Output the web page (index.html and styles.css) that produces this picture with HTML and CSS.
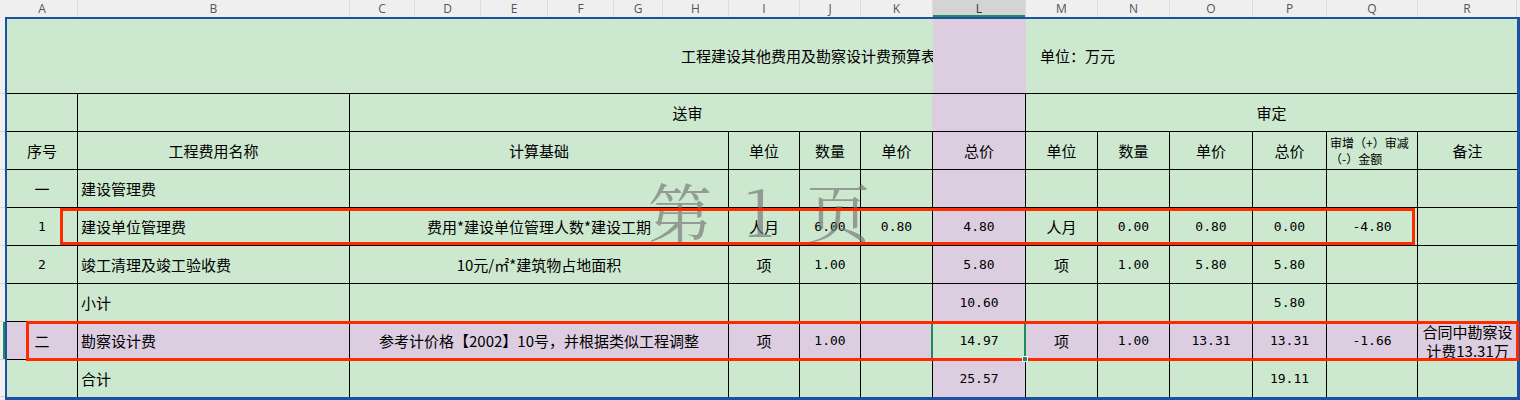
FILE: index.html
```html
<!DOCTYPE html>
<html lang="zh-CN">
<head>
<meta charset="utf-8">
<title>工程建设其他费用及勘察设计费预算表</title>
<link rel="stylesheet" href="styles.css">
</head>
<body>
<div class="app">
  <div class="colhead">
    <div class="corner"></div>
    <div class="ch">A</div><div class="ch">B</div><div class="ch">C</div><div class="ch">D</div>
    <div class="ch">E</div><div class="ch">F</div><div class="ch">G</div><div class="ch">H</div>
    <div class="ch">I</div><div class="ch">J</div><div class="ch">K</div><div class="ch sel">L</div>
    <div class="ch">M</div><div class="ch">N</div><div class="ch">O</div><div class="ch">P</div>
    <div class="ch">Q</div><div class="ch">R</div><div class="ch-rest"></div>
  </div>
  <div class="main">
    <div class="rowhead">
      <div class="rh0"></div><div class="rh"></div><div class="rh"></div><div class="rh"></div><div class="rh"></div>
      <div class="rh"></div><div class="rh"></div><div class="rh"></div><div class="rh rh-sel"></div><div class="rh"></div>
    </div>
    <div class="sheet">
      <!-- row 1 -->
      <div class="c t1 t-left"><span class="title">工程建设其他费用及勘察设计费预算表</span></div>
      <div class="c t1 pu"></div>
      <div class="c t1 t-right">单位：万元</div>
      <!-- row 2 -->
      <div class="c"></div>
      <div class="c"></div>
      <div class="c span-cl">送审</div>
      <div class="c span-mr nr">审定</div>
      <!-- row 3 -->
      <div class="c">序号</div>
      <div class="c">工程费用名称</div>
      <div class="c span-ch">计算基础</div>
      <div class="c">单位</div>
      <div class="c">数量</div>
      <div class="c">单价</div>
      <div class="c pu">总价</div>
      <div class="c">单位</div>
      <div class="c">数量</div>
      <div class="c">单价</div>
      <div class="c">总价</div>
      <div class="c qh">审增（+）审减（-）金额</div>
      <div class="c nr">备注</div>
      <!-- row 4 -->
      <div class="c">一</div>
      <div class="c l">建设管理费</div>
      <div class="c span-ch"></div>
      <div class="c"></div><div class="c"></div><div class="c"></div>
      <div class="c pu"></div>
      <div class="c"></div><div class="c"></div><div class="c"></div><div class="c"></div><div class="c"></div>
      <div class="c nr"></div>
      <!-- row 5 -->
      <div class="c n">1</div>
      <div class="c l">建设单位管理费</div>
      <div class="c span-ch">费用*建设单位管理人数*建设工期</div>
      <div class="c">人月</div>
      <div class="c n">6.00</div>
      <div class="c n">0.80</div>
      <div class="c n pu">4.80</div>
      <div class="c">人月</div>
      <div class="c n">0.00</div>
      <div class="c n">0.80</div>
      <div class="c n">0.00</div>
      <div class="c n">-4.80</div>
      <div class="c nr"></div>
      <!-- row 6 -->
      <div class="c n">2</div>
      <div class="c l">竣工清理及竣工验收费</div>
      <div class="c span-ch">10元/㎡*建筑物占地面积</div>
      <div class="c">项</div>
      <div class="c n">1.00</div>
      <div class="c"></div>
      <div class="c n pu">5.80</div>
      <div class="c">项</div>
      <div class="c n">1.00</div>
      <div class="c n">5.80</div>
      <div class="c n">5.80</div>
      <div class="c"></div>
      <div class="c nr"></div>
      <!-- row 7 -->
      <div class="c"></div>
      <div class="c l">小计</div>
      <div class="c span-ch"></div>
      <div class="c"></div><div class="c"></div><div class="c"></div>
      <div class="c n pu">10.60</div>
      <div class="c"></div><div class="c"></div><div class="c"></div>
      <div class="c n">5.80</div>
      <div class="c"></div>
      <div class="c nr"></div>
      <!-- row 8 -->
      <div class="c pu">二</div>
      <div class="c l pu">勘察设计费</div>
      <div class="c span-ch pu">参考计价格【2002】10号，并根据类似工程调整</div>
      <div class="c pu">项</div>
      <div class="c n pu">1.00</div>
      <div class="c pu"></div>
      <div class="c n active">14.97</div>
      <div class="c pu">项</div>
      <div class="c n pu">1.00</div>
      <div class="c n pu">13.31</div>
      <div class="c n pu">13.31</div>
      <div class="c n pu">-1.66</div>
      <div class="c nr pu note">合同中勘察设计费13.31万</div>
      <!-- row 9 -->
      <div class="c last"></div>
      <div class="c l last">合计</div>
      <div class="c span-ch last"></div>
      <div class="c last"></div><div class="c last"></div><div class="c last"></div>
      <div class="c n pu last">25.57</div>
      <div class="c last"></div><div class="c last"></div><div class="c last"></div>
      <div class="c n last">19.11</div>
      <div class="c last"></div>
      <div class="c nr last"></div>
    </div>
  </div>

  <div class="wm"><span>第</span><span>1</span><span>页</span></div>
  <div class="mark m1"></div>
  <div class="mark m2"></div>
</div>
</body>
</html>
```

FILE: styles.css
```css
html, body {
  margin: 0;
  padding: 0;
}
body {
  background: #efefef;
  font-family: "Noto Sans CJK SC", sans-serif;
}
.app {
  position: relative;
  width: 1520px;
  height: 400px;
  overflow: hidden;
  background: #efefef;
}

/* column letters */
.colhead {
  display: grid;
  grid-template-columns: 7px 71px 272px 65px 66px 67px 66px 49px 66px 71px 61px 72px 93px 72px 72px 83px 74px 91px 99px 1fr;
  height: 17px;
  background: #efefef;
  font-family: "Open Sans", "Liberation Sans", sans-serif;
  font-size: 12px;
  color: #555;
}
.ch {
  box-sizing: border-box;
  border-right: 1px solid #dcdcdc;
  display: flex;
  align-items: center;
  justify-content: center;
  line-height: 15px;
}
.ch.sel {
  background: #d4d4d4;
  box-shadow: inset 0 -2px 0 #1f8a5a;
  color: #333;
}

.main {
  display: flex;
}

/* row header strip */
.rowhead {
  width: 5px;
  display: grid;
  grid-template-rows: 2px 75px repeat(7, 38px) 37px;
}
.rh {
  box-sizing: border-box;
  border-bottom: 1px solid #d6d6d6;
}
.rh-sel {
  box-shadow: inset -2px 0 0 #1f8a5a;
}

/* the sheet */
.sheet {
  display: grid;
  grid-template-columns: 71px 272px 65px 66px 67px 66px 49px 66px 71px 61px 72px 93px 72px 72px 83px 74px 91px 99px;
  grid-template-rows: 75px repeat(7, 38px) 37px;
  border: 2px solid #1d4fa3;
  border-right-width: 3px;
  border-bottom-width: 3px;
  background: #cce8cf;
  color: #000;
}
.c {
  box-sizing: border-box;
  border-right: 1px solid #000;
  border-bottom: 1px solid #000;
  display: flex;
  align-items: center;
  justify-content: center;
  font-size: 15px;
  line-height: 18px;
  white-space: nowrap;
  min-width: 0;
}
.c.l {
  justify-content: flex-start;
  padding-left: 3px;
}
.c.n {
  font-family: "DejaVu Sans Mono", "Liberation Mono", monospace;
  font-size: 13px;
}
.c.nr {
  border-right: none;
}
.c.last {
  border-bottom: none;
}
.pu {
  background: #dccee0;
}

/* title row */
.t1 {
  border-right: none;
}
.t-left {
  grid-column: 1 / 12;
  justify-content: flex-end;
}
.title {
  margin-right: -3px;
}
.t-right {
  grid-column: 13 / 19;
  justify-content: flex-start;
  padding-left: 14px;
}

/* merged cells */
.span-cl {
  grid-column: 3 / 13;
  background: linear-gradient(to right, transparent calc(100% - 93px), #dccee0 calc(100% - 93px));
}
.span-mr {
  grid-column: 13 / 19;
}
.span-ch {
  grid-column: 3 / 9;
}

.qh {
  justify-content: flex-start;
  white-space: normal;
  font-size: 12px;
  line-height: 16px;
  padding: 0 1px 0 3px;
  text-align: left;
}
.note {
  white-space: normal;
  text-align: center;
  line-height: 19px;
}

/* active cell */
.active {
  position: relative;
  background: #cce8cf;
}
.active::after {
  content: "";
  position: absolute;
  left: -2px;
  top: -1px;
  right: -1px;
  bottom: -1px;
  border: 2px solid #1f8a5a;
}
.active::before {
  content: "";
  position: absolute;
  right: -3px;
  bottom: -3px;
  width: 4px;
  height: 4px;
  background: #1f8a5a;
  border: 1px solid #fff;
  z-index: 1;
}

/* overlays */
.wm {
  position: absolute;
  left: 648px;
  top: 177px;
  display: flex;
  gap: 32px;
  font-family: "Noto Serif CJK SC", "Noto Sans CJK SC", serif;
  font-size: 64px;
  line-height: 1;
  color: rgba(115, 115, 115, 0.65);
  pointer-events: none;
}
.mark {
  position: absolute;
  box-sizing: border-box;
  border: 3px solid #ff2a00;
  pointer-events: none;
}
.m1 {
  left: 60px;
  top: 208px;
  width: 1355px;
  height: 37px;
}
.m2 {
  left: 26px;
  top: 321px;
  width: 1493px;
  height: 40px;
}
```
